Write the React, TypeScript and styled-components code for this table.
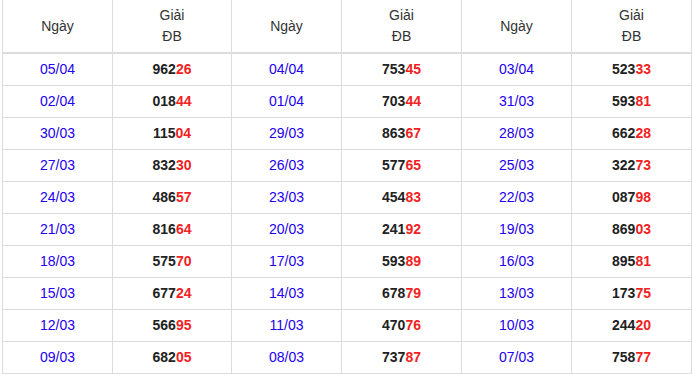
import React from 'react';
import styled, {createGlobalStyle} from "styled-components";

const rows: [string, string][][] = [
    [["05/04", "96226"], ["04/04", "75345"], ["03/04", "52333"]],
    [["02/04", "01844"], ["01/04", "70344"], ["31/03", "59381"]],
    [["30/03", "11504"], ["29/03", "86367"], ["28/03", "66228"]],
    [["27/03", "83230"], ["26/03", "57765"], ["25/03", "32273"]],
    [["24/03", "48657"], ["23/03", "45483"], ["22/03", "08798"]],
    [["21/03", "81664"], ["20/03", "24192"], ["19/03", "86903"]],
    [["18/03", "57570"], ["17/03", "59389"], ["16/03", "89581"]],
    [["15/03", "67724"], ["14/03", "67879"], ["13/03", "17375"]],
    [["12/03", "56695"], ["11/03", "47076"], ["10/03", "24420"]],
    [["09/03", "68205"], ["08/03", "73787"], ["07/03", "75877"]],
];

const widths = [110, 119, 110, 120, 110, 120];

export default function App() {
    return (
        <>
            <GlobalStyle/>
            <Wrap>
                <Table>
                    <colgroup>
                        {widths.map((w, i) => <col key={i} style={{width: w}}/>)}
                    </colgroup>
                    <thead>
                    <tr>
                        {[0, 1, 2].map((i) => (
                            <React.Fragment key={i}>
                                <HeadCell>Ngày</HeadCell>
                                <HeadCell>Giải<br/>ĐB</HeadCell>
                            </React.Fragment>
                        ))}
                    </tr>
                    </thead>
                    <tbody>
                    {rows.map((row, r) => (
                        <tr key={r}>
                            {row.map(([date, num], i) => (
                                <React.Fragment key={i}>
                                    <DateCell>{date}</DateCell>
                                    <NumCell>{num.slice(0, 3)}<Tail>{num.slice(3)}</Tail></NumCell>
                                </React.Fragment>
                            ))}
                        </tr>
                    ))}
                    </tbody>
                </Table>
            </Wrap>
        </>
    );
}

const GlobalStyle = createGlobalStyle`
    body {
        margin: 0;
        background: #fff;
        font-family: "Liberation Sans", Arial, sans-serif;
    }
`;

const Wrap = styled.div`
    padding-left: 2px;
`;

const Table = styled.table`
    table-layout: fixed;
    width: 690px;
    border-collapse: separate;
    border-spacing: 0;
    border-left: 1px solid #dcdcdc;
    font-size: 14px;
`;

const HeadCell = styled.th`
    padding: 5px 0;
    line-height: 21px;
    font-weight: normal;
    color: #333;
    text-align: center;
    border-right: 1px solid #dcdcdc;
    border-bottom: 2px solid #dcdcdc;
`;

const DateCell = styled.td`
    padding: 0;
    line-height: 31px;
    text-align: center;
    color: #2200ee;
    border-right: 1px solid #dcdcdc;
    border-bottom: 1px solid #dcdcdc;
`;

const NumCell = styled(DateCell)`
    color: #222;
    font-weight: bold;
`;

const Tail = styled.span`
    color: #f22222;
`;
